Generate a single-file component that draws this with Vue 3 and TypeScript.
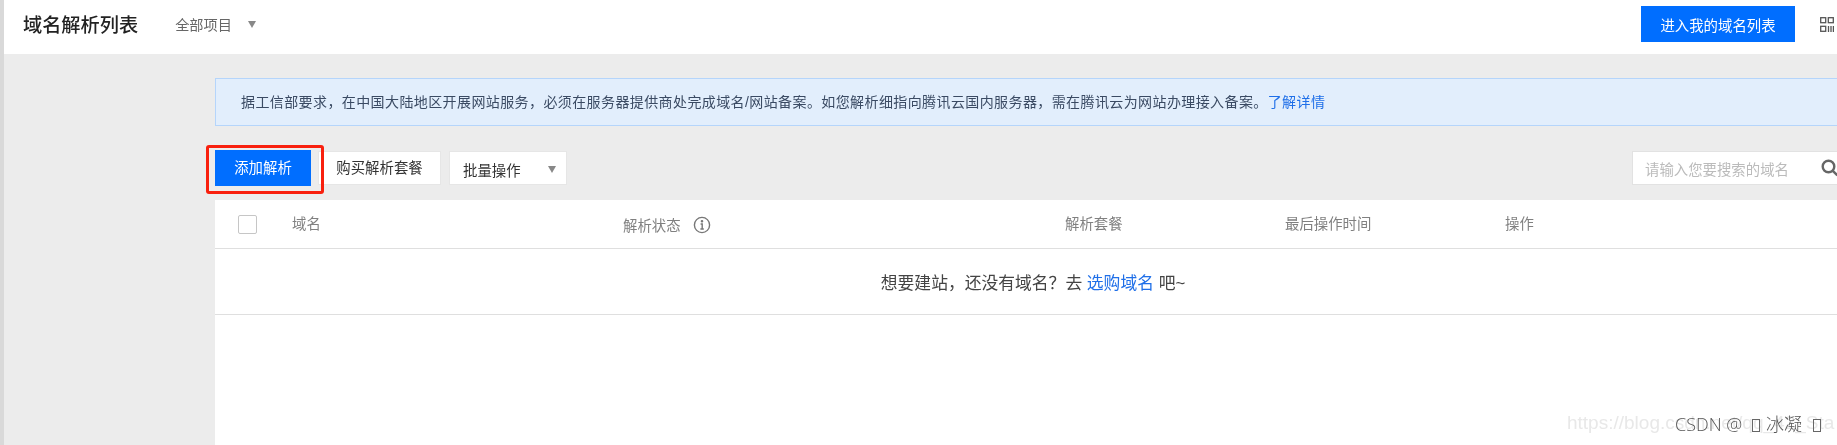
<script setup lang="ts">
const columns: { label: string; width: number; info?: boolean }[] = [
  { label: '解析状态', width: 442, info: true },
  { label: '解析套餐', width: 220 },
  { label: '最后操作时间', width: 220 },
  { label: '操作', width: 200 },
]
</script>

<template>
  <div class="page">
    <div class="strip"></div>
    <div class="main">
      <header class="topbar">
        <h1 class="title">域名解析列表</h1>
        <span class="project">全部项目</span>
        <span class="caret project-caret"></span>
        <button class="btn primary enter">进入我的域名列表</button>
        <svg class="qr" width="14" height="15" viewBox="0 0 14 15" fill="none" stroke="#555" stroke-width="1.3">
          <rect x="0.7" y="0.7" width="5" height="5" />
          <rect x="8.3" y="0.7" width="5" height="5" />
          <rect x="0.7" y="9.3" width="5" height="5" />
          <path d="M8.5 9v6M11 9v6M13.4 9v6" />
        </svg>
      </header>

      <div class="content">
        <div class="notice">
          <span>据工信部要求，在中国大陆地区开展网站服务，必须在服务器提供商处完成域名/网站备案。如您解析细指向腾讯云国内服务器，需在腾讯云为网站办理接入备案。<a class="link">了解详情</a></span>
        </div>

        <div class="toolbar">
          <div class="highlight">
            <button class="btn primary add">添加解析</button>
          </div>
          <button class="btn plain buy">购买解析套餐</button>
          <div class="btn plain batch">
            <span>批量操作</span>
            <span class="caret"></span>
          </div>
          <div class="search">
            <span class="placeholder">请输入您要搜索的域名</span>
            <svg class="search-icon" width="18" height="18" viewBox="0 0 18 18" fill="none" stroke="#666" stroke-width="2.4">
              <circle cx="7.5" cy="7.5" r="5.8" />
              <path d="M11.8 11.8l4.6 4.6" />
            </svg>
          </div>
        </div>

        <section class="table">
          <div class="thead">
            <span class="checkbox"></span>
            <span class="th-domain">域名</span>
            <span
              v-for="col in columns"
              :key="col.label"
              class="th"
              :class="{ 'th-status': col.info }"
              :style="{ width: col.width + 'px' }"
            >
              {{ col.label }}
              <svg v-if="col.info" class="info" width="18" height="18" viewBox="0 0 18 18" fill="none" stroke="#777" stroke-width="1.4">
                <circle cx="9" cy="9" r="7.6" />
                <path d="M7.6 8h1.6v5M7.4 13h3.4" />
                <circle cx="9" cy="5.2" r="0.6" fill="#777" />
              </svg>
            </span>
          </div>
          <div class="empty">想要建站，还没有域名？去 <a class="link">选购域名</a> 吧~</div>
        </section>
      </div>
    </div>

    <div class="watermark">
      <span class="wm-url">https://blog.csdn.net/qq_42_Sta</span>
      <span class="wm-csdn">CSDN @<i class="tofu tofu-first"></i> 冰凝 <i class="tofu tofu-last"></i></span>
    </div>
  </div>
</template>

<style>
html,
body {
  margin: 0;
  background: #fff;
}
</style>

<style scoped>
.page {
  position: relative;
  display: flex;
  width: 1837px;
  height: 445px;
  overflow: hidden;
  background: #ececec;
  font-family: "Liberation Sans", "Noto Sans CJK SC", sans-serif;
  font-size: 14.4px;
  color: #333;
  filter: blur(0.4px);
}
.strip {
  flex: none;
  width: 4px;
  background: #d9d9d9;
}
.main {
  flex: none;
  width: 1833px;
  display: flex;
  flex-direction: column;
}
.topbar {
  flex: none;
  box-sizing: border-box;
  height: 54px;
  display: flex;
  align-items: center;
  padding: 0 0 6px 19px;
  background: #fff;
}
.title {
  margin: 0;
  font-size: 19.2px;
  font-weight: 500;
  color: #222;
}
.project {
  margin-left: 37px;
  font-size: 14.2px;
  color: #666;
}
.caret {
  flex: none;
  display: inline-block;
  width: 0;
  height: 0;
  border-left: 4.5px solid transparent;
  border-right: 4.5px solid transparent;
  border-top: 7px solid #888;
}
.project-caret {
  margin: 1px 0 0 16px;
}
.btn {
  flex: none;
  box-sizing: border-box;
  border: 1px solid transparent;
  font: inherit;
  padding: 0;
}
.primary {
  background: #006eff;
  color: #fff;
}
.enter {
  width: 154px;
  height: 36px;
  margin-left: auto;
}
.qr {
  flex: none;
  margin: 0 3px 0 25px;
}
.content {
  padding: 24px 0 0 211px;
  flex: 1;
  min-height: 0;
}
.notice {
  box-sizing: border-box;
  height: 48px;
  width: 1640px;
  display: flex;
  align-items: center;
  padding: 0 0 2px 25px;
  background: #e2eefc;
  border: 1px solid #b5d5fb;
  border-right: none;
  color: #3a4a63;
  font-size: 14px;
  letter-spacing: 0.4px;
  white-space: nowrap;
}
.link {
  color: #1f6fe8;
}
.toolbar {
  height: 36px;
  margin-top: 24px;
  display: flex;
  align-items: center;
}
.highlight {
  position: relative;
  z-index: 1;
  flex: none;
  box-sizing: border-box;
  width: 118px;
  height: 49px;
  margin: 3px 0 0 -9px;
  padding: 5px 0 0 9px;
  box-shadow: inset 0 0 0 3px #f8200e;
  border-radius: 3px;
  display: flex;
}
.add {
  width: 96px;
  height: 36px;
  padding-bottom: 3px;
}
.plain {
  height: 34px;
  background: #fff;
  border-color: #e6e6e6;
  color: #333;
}
.buy {
  width: 123px;
  margin-left: -6px;
  padding-bottom: 3px;
}
.batch {
  width: 118px;
  margin-left: 8px;
  padding: 2px 10px 0 13px;
  display: flex;
  align-items: center;
  justify-content: space-between;
}
.search {
  flex: none;
  box-sizing: border-box;
  width: 220px;
  height: 34px;
  margin-left: 1065px;
  display: flex;
  align-items: center;
  padding-left: 12px;
  background: #fff;
  border: 1px solid #e2e2e2;
}
.placeholder {
  flex: none;
  color: #bbb;
}
.search-icon {
  flex: none;
  margin-left: 32px;
}
.table {
  margin-top: 14px;
  width: 1640px;
  height: 260px;
  background: #fff;
}
.thead {
  box-sizing: border-box;
  height: 49px;
  display: flex;
  align-items: center;
  border-bottom: 1px solid #dfdfdf;
  color: #808080;
}
.checkbox {
  flex: none;
  box-sizing: border-box;
  width: 19px;
  height: 19px;
  margin-left: 23px;
  border: 1px solid #c6c6c6;
  border-radius: 2px;
}
.th-domain {
  flex: none;
  width: 331px;
  margin: 0 0 3px 35px;
}
.th {
  flex: none;
  display: flex;
  align-items: center;
  margin-bottom: 3px;
}
.th-status {
  margin-bottom: 0;
}
.info {
  margin: 2px 0 0 12px;
}
.empty {
  height: 66px;
  box-sizing: border-box;
  border-bottom: 1px solid #dfdfdf;
  padding-right: 4px;
  line-height: 70px;
  text-align: center;
  font-size: 16.8px;
  color: #444;
}
.watermark {
  position: absolute;
  right: 0;
  bottom: 9px;
  width: 270px;
  height: 24px;
  font-size: 18px;
}
.wm-url {
  position: absolute;
  left: 0;
  top: 0;
  font-family: "Liberation Sans", sans-serif;
  font-size: 19px;
  color: #e8e8e8;
  white-space: nowrap;
}
.wm-csdn {
  position: absolute;
  left: 108px;
  top: -2px;
  font-family: "Open Sans", "Noto Sans CJK SC", sans-serif;
  font-weight: 300;
  color: #555;
  white-space: nowrap;
}
.tofu {
  display: inline-block;
  box-sizing: border-box;
  width: 8px;
  height: 13px;
  border: 1px solid #666;
  vertical-align: -1px;
}
.tofu-first {
  margin: 0 1px 0 10px;
}
.tofu-last {
  margin-left: 6px;
}
</style>
